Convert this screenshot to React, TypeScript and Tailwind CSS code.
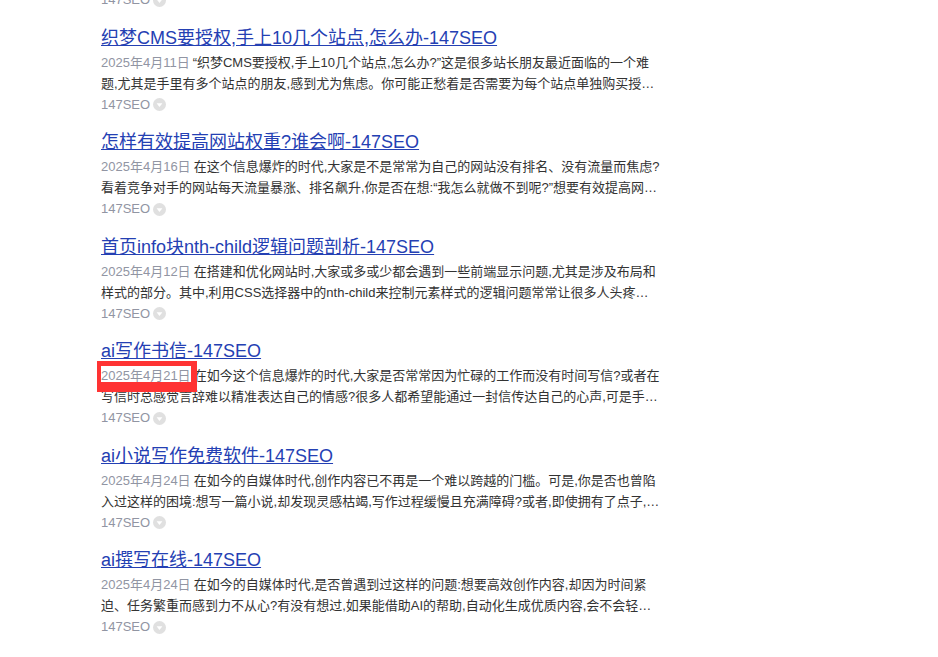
const items = [
  {
    title: '织梦CMS要授权,手上10几个站点,怎么办-147SEO',
    date: '2025年4月11日',
    line1: '“织梦CMS要授权,手上10几个站点,怎么办?”这是很多站长朋友最近面临的一个难',
    line2: '题,尤其是手里有多个站点的朋友,感到尤为焦虑。你可能正愁着是否需要为每个站点单独购买授…',
  },
  {
    title: '怎样有效提高网站权重?谁会啊-147SEO',
    date: '2025年4月16日',
    line1: '在这个信息爆炸的时代,大家是不是常常为自己的网站没有排名、没有流量而焦虑?',
    line2: '看着竞争对手的网站每天流量暴涨、排名飙升,你是否在想:“我怎么就做不到呢?”想要有效提高网…',
  },
  {
    title: '首页info块nth-child逻辑问题剖析-147SEO',
    date: '2025年4月12日',
    line1: '在搭建和优化网站时,大家或多或少都会遇到一些前端显示问题,尤其是涉及布局和',
    line2: '样式的部分。其中,利用CSS选择器中的nth-child来控制元素样式的逻辑问题常常让很多人头疼…',
  },
  {
    title: 'ai写作书信-147SEO',
    date: '2025年4月21日',
    line1: '在如今这个信息爆炸的时代,大家是否常常因为忙碌的工作而没有时间写信?或者在',
    line2: '写信时总感觉言辞难以精准表达自己的情感?很多人都希望能通过一封信传达自己的心声,可是手…',
    marked: true,
  },
  {
    title: 'ai小说写作免费软件-147SEO',
    date: '2025年4月24日',
    line1: '在如今的自媒体时代,创作内容已不再是一个难以跨越的门槛。可是,你是否也曾陷',
    line2: '入过这样的困境:想写一篇小说,却发现灵感枯竭,写作过程缓慢且充满障碍?或者,即使拥有了点子,…',
  },
  {
    title: 'ai撰写在线-147SEO',
    date: '2025年4月24日',
    line1: '在如今的自媒体时代,是否曾遇到过这样的问题:想要高效创作内容,却因为时间紧',
    line2: '迫、任务繁重而感到力不从心?有没有想过,如果能借助AI的帮助,自动化生成优质内容,会不会轻…',
  },
];

function Source() {
  return (
    <div className="flex h-[21px] items-center gap-[3px] text-[13px] leading-[21px] text-[#9195a3]">
      <span>147SEO</span>
      <svg width="13" height="13" viewBox="0 0 13 13" className="mt-[1px]">
        <circle cx="6.5" cy="6.5" r="6.5" fill="#e0e0e0" />
        <path d="M3.6 5.2h5.8L6.5 9z" fill="#fff" />
      </svg>
    </div>
  );
}

export default function App() {
  return (
    <div
      className="h-[657px] overflow-hidden bg-white"
      style={{ fontFamily: 'Arial, "Liberation Sans", "Noto Sans CJK SC", sans-serif' }}
    >
      <div className="-mt-[11px] ml-[101px] w-[562px]">
        <div className="mb-[13.5px]">
          <Source />
        </div>
        {items.map((item) => (
          <div key={item.title} className="mb-[13.5px]">
            <a href="#" className="block h-[28px] text-[18px] leading-[28px] text-[#2440b3] underline">
              {item.title}
            </a>
            <p className="whitespace-nowrap text-[13px] leading-[21px] text-[#333333]">
              <span className={item.marked ? 'relative mr-[3px] text-[#9195a3]' : 'mr-[3px] text-[#9195a3]'}>
                {item.date}
                {item.marked && (
                  <span className="absolute -left-[4px] -top-[7px] h-[31px] w-[100px] border-[#ff3333] border-t-[5px] border-r-[6px] border-b-[10px] border-l-[4px]" />
                )}
              </span>
              {item.line1}
            </p>
            <p className="whitespace-nowrap text-[13px] leading-[21px] text-[#333333]">{item.line2}</p>
            <Source />
          </div>
        ))}
      </div>
    </div>
  );
}
